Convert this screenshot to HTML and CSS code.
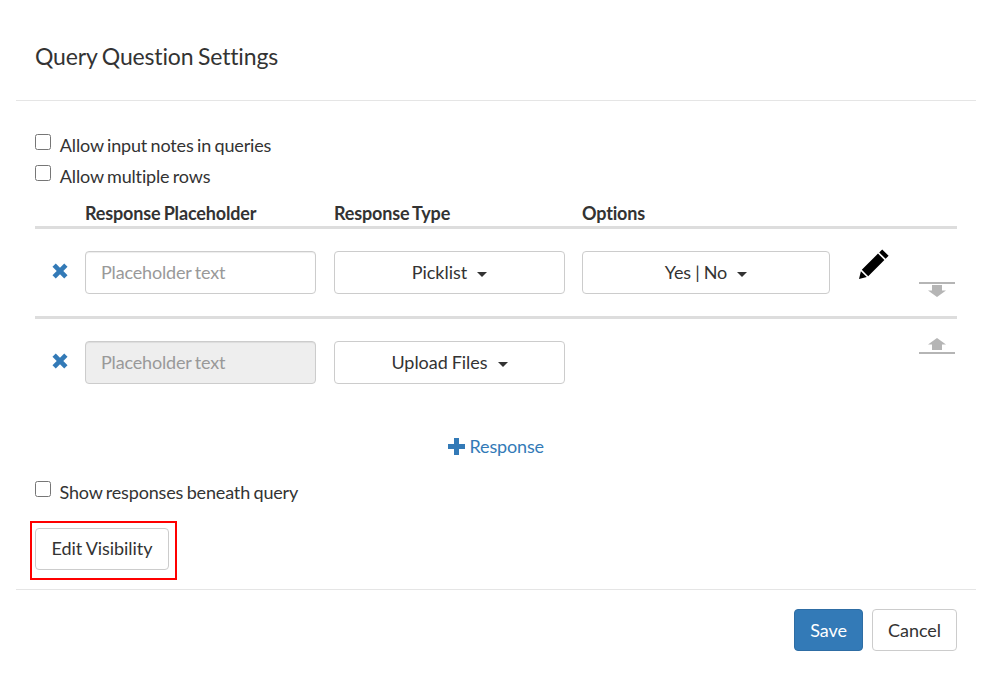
FILE: index.html
```html
<!DOCTYPE html>
<html lang="en">
  <head>
    <meta charset="UTF-8" />
    <meta name="viewport" content="width=device-width, initial-scale=1.0" />
    <title>Query Question Settings</title>
    <link rel="stylesheet" href="styles.css">
  </head>
  <body>
    <div class="modal">
      <div class="modal-header">
        <h1>Query Question Settings</h1>
      </div>

      <div class="modal-body">
        <label class="check"><input type="checkbox" /> Allow input notes in queries</label>
        <label class="check"><input type="checkbox" /> Allow multiple rows</label>

        <div class="row head-row">
          <div class="col-remove"></div>
          <div class="col-placeholder">Response Placeholder</div>
          <div class="col-type">Response Type</div>
          <div class="col-options">Options</div>
        </div>

        <div class="row response-row">
          <div class="col-remove">
            <svg class="icon-x" viewBox="0 0 17 17"><path d="M0.5 4L4 0.5L8.5 5L13 0.5L16.5 4L12 8.5L16.5 13L13 16.5L8.5 12L4 16.5L0.5 13L5 8.5Z" /></svg>
          </div>
          <div class="col-placeholder">
            <input class="text-input" type="text" placeholder="Placeholder text" />
          </div>
          <div class="col-type">
            <button class="btn dropdown">Picklist <span class="caret"></span></button>
          </div>
          <div class="col-options">
            <button class="btn dropdown options-btn">Yes | No <span class="caret"></span></button>
          </div>
          <div class="col-edit">
            <svg class="icon-pencil" viewBox="0 0 30 30"><path d="M23.2 0.4L29.6 6.8L26.6 9.8L20.2 3.4ZM19 4.6L25.4 11L9.2 27.2L2.8 20.8ZM1.9 22.2L7.8 28.1L0 30Z" /></svg>
          </div>
          <div class="col-move">
            <svg class="icon-move" viewBox="0 0 36 16"><path d="M0 0H36V2H0ZM13 3H23V8.5H27L18 15L9 8.5H13Z" /></svg>
          </div>
        </div>

        <div class="row response-row">
          <div class="col-remove">
            <svg class="icon-x" viewBox="0 0 17 17"><path d="M0.5 4L4 0.5L8.5 5L13 0.5L16.5 4L12 8.5L16.5 13L13 16.5L8.5 12L4 16.5L0.5 13L5 8.5Z" /></svg>
          </div>
          <div class="col-placeholder">
            <input class="text-input" type="text" placeholder="Placeholder text" disabled />
          </div>
          <div class="col-type">
            <button class="btn dropdown">Upload Files <span class="caret"></span></button>
          </div>
          <div class="col-options"></div>
          <div class="col-edit"></div>
          <div class="col-move move-up">
            <svg class="icon-move" viewBox="0 0 36 16"><path d="M18 0L27 6.5H23V12H13V6.5H9ZM0 14H36V16H0Z" /></svg>
          </div>
        </div>

        <div class="add-row">
          <a class="add-link" href="#"><svg class="icon-plus" viewBox="0 0 17 17"><path d="M6 0H11V6H17V11H11V17H6V11H0V6H6Z" /></svg> Response</a>
        </div>

        <label class="check show-check"><input type="checkbox" /> Show responses beneath query</label>

        <div class="visibility-box">
          <button class="btn">Edit Visibility</button>
        </div>
      </div>

      <div class="modal-footer">
        <button class="btn btn-primary">Save</button>
        <button class="btn btn-cancel">Cancel</button>
      </div>
    </div>
  </body>
</html>
```

FILE: styles.css
```css
body {
  font-family: "Lato", "Liberation Sans", sans-serif;
  font-size: 18px;
  line-height: 25px;
  letter-spacing: -0.16px;
  word-spacing: -1px;
  color: #333;
  margin: 0;
  background-color: white;
}
.modal {
  margin: 0 6px 0 16px;
}
.modal-header {
  height: 100px;
  padding: 0 19px;
  border-bottom: 1px solid #e5e5e5;
}
h1 {
  margin: 0;
  padding-top: 39px;
  font-size: 23px;
  line-height: 34px;
  font-weight: 400;
}
.modal-body {
  padding: 29px 19px 0;
  height: 459px;
}
.check {
  display: block;
  height: 31px;
  padding-top: 3px;
  box-sizing: border-box;
}
.check input {
  width: 16px;
  height: 16px;
  margin: 0 6px 0 0;
  vertical-align: 2px;
}
.show-check input {
  margin-right: 5px;
}
.row {
  display: flex;
  width: 922px;
}
.head-row {
  font-weight: 700;
  height: 34px;
  padding-top: 9px;
  box-sizing: border-box;
}
.response-row {
  border-top: 3px solid #ddd;
  height: 87px;
  align-items: flex-start;
}
.col-remove {
  width: 50px;
  flex: none;
}
.col-placeholder {
  width: 249px;
  flex: none;
}
.col-type {
  width: 248px;
  flex: none;
}
.col-options {
  width: 277px;
  flex: none;
}
.col-edit {
  width: 60px;
  flex: none;
}
.col-move {
  flex: none;
}
.icon-x {
  display: block;
  width: 16px;
  height: 16px;
  margin: 34px 0 0 17px;
  fill: #337ab7;
}
.response-row .col-placeholder,
.response-row .col-type,
.response-row .col-options {
  padding-top: 22px;
}
.text-input {
  display: block;
  width: 231px;
  height: 43px;
  box-sizing: border-box;
  padding: 5px 15px 7px;
  font: inherit;
  letter-spacing: inherit;
  word-spacing: inherit;
  color: #333;
  border: 1px solid #ccc;
  border-radius: 4px;
  background: white;
  box-shadow: inset 0 1px 1px rgba(0, 0, 0, 0.075);
}
.text-input::placeholder {
  color: #999;
  opacity: 1;
}
.text-input:disabled {
  background-color: #eee;
}
.btn {
  height: 42px;
  padding: 0 15px;
  font: inherit;
  letter-spacing: -0.05px;
  word-spacing: -0.5px;
  white-space: nowrap;
  color: #333;
  background-color: white;
  border: 1px solid #ccc;
  border-radius: 4px;
  cursor: pointer;
}
.dropdown {
  display: block;
  width: 231px;
  height: 43px;
}
.options-btn {
  width: 248px;
}
.caret {
  display: inline-block;
  width: 0;
  height: 0;
  margin-left: 6px;
  vertical-align: middle;
  border-top: 5px solid #333;
  border-left: 5px solid transparent;
  border-right: 5px solid transparent;
}
.icon-pencil {
  display: block;
  width: 30px;
  height: 30px;
  margin-top: 20px;
  fill: #000;
}
.icon-move {
  display: block;
  width: 36px;
  height: 16px;
  margin-top: 53px;
  fill: #b5b5b5;
}
.move-up .icon-move {
  margin-top: 19px;
}
.add-row {
  text-align: center;
  height: 71px;
  padding-top: 28px;
  box-sizing: border-box;
}
.add-link {
  color: #337ab7;
  text-decoration: none;
}
.icon-plus {
  width: 17px;
  height: 17px;
  margin-right: 1px;
  fill: #337ab7;
  vertical-align: -2px;
}
.visibility-box {
  margin: 13px 0 0 -5px;
  width: 147px;
  height: 59px;
  box-sizing: border-box;
  border: 2px solid #f00;
  padding: 5px 3px;
}
.visibility-box .btn {
  width: 134px;
  padding: 0 0 2px;
}
.modal-footer {
  display: flex;
  justify-content: flex-end;
  gap: 9px;
  border-top: 1px solid #e5e5e5;
  padding: 19px 19px 0;
}
.btn-primary {
  width: 69px;
  padding: 0;
  background-color: #337ab7;
  border-color: #2e6da4;
  color: white;
}
.btn-cancel {
  width: 85px;
  padding: 0;
}
```
